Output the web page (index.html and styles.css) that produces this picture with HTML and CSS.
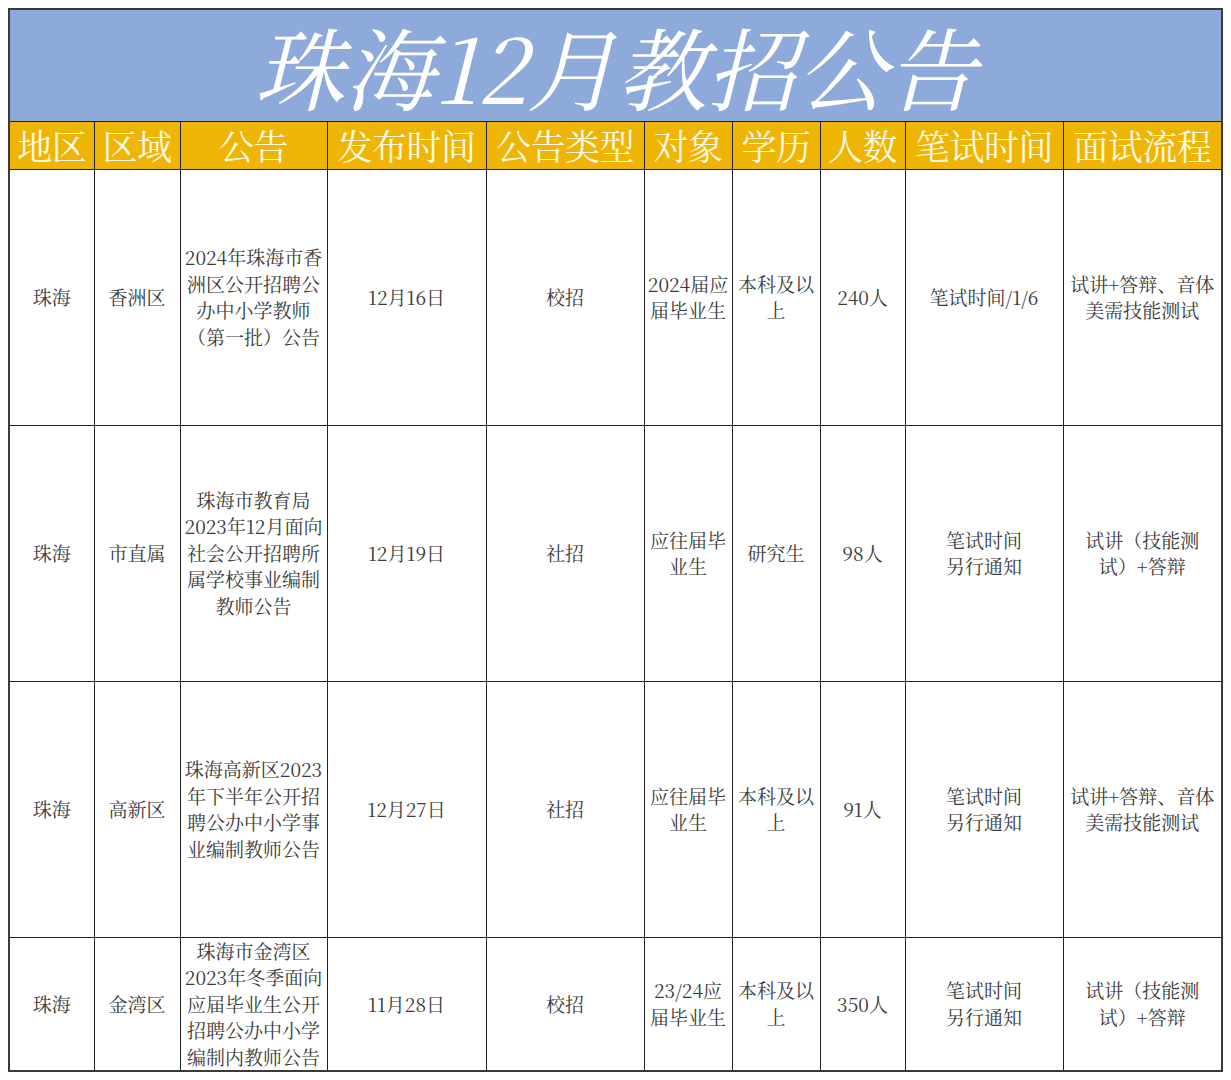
FILE: index.html
```html
<!DOCTYPE html>
<html lang="zh-CN">
<head>
<meta charset="utf-8">
<title>珠海12月教招公告</title>
<link rel="stylesheet" href="styles.css">
</head>
<body>
<table class="sheet">
  <colgroup>
    <col class="c85"><col class="c86"><col class="c147"><col class="c159"><col class="c158">
    <col class="c88"><col class="c88"><col class="c85"><col class="c158"><col class="c159">
  </colgroup>
  <tr class="title-row"><td colspan="10" class="title">珠海12月教招公告</td></tr>
  <tr class="head-row">
    <th>地区</th><th>区域</th><th>公告</th><th>发布时间</th><th>公告类型</th><th>对象</th><th>学历</th><th>人数</th><th>笔试时间</th><th>面试流程</th>
  </tr>
  <tr class="row tall">
    <td>珠海</td><td>香洲区</td>
    <td>2024年珠海市香<br>洲区公开招聘公<br>办中小学教师<br>（第一批）公告</td>
    <td>12月16日</td><td>校招</td>
    <td>2024届应<br>届毕业生</td><td>本科及以<br>上</td><td>240人</td>
    <td>笔试时间/1/6</td><td>试讲+答辩、音体<br>美需技能测试</td>
  </tr>
  <tr class="row tall">
    <td>珠海</td><td>市直属</td>
    <td>珠海市教育局<br>2023年12月面向<br>社会公开招聘所<br>属学校事业编制<br>教师公告</td>
    <td>12月19日</td><td>社招</td>
    <td>应往届毕<br>业生</td><td>研究生</td><td>98人</td>
    <td>笔试时间<br>另行通知</td><td>试讲（技能测<br>试）+答辩</td>
  </tr>
  <tr class="row tall">
    <td>珠海</td><td>高新区</td>
    <td>珠海高新区2023<br>年下半年公开招<br>聘公办中小学事<br>业编制教师公告</td>
    <td>12月27日</td><td>社招</td>
    <td>应往届毕<br>业生</td><td>本科及以<br>上</td><td>91人</td>
    <td>笔试时间<br>另行通知</td><td>试讲+答辩、音体<br>美需技能测试</td>
  </tr>
  <tr class="row short">
    <td>珠海</td><td>金湾区</td>
    <td>珠海市金湾区<br>2023年冬季面向<br>应届毕业生公开<br>招聘公办中小学<br>编制内教师公告</td>
    <td>11月28日</td><td>校招</td>
    <td>23/24应<br>届毕业生</td><td>本科及以<br>上</td><td>350人</td>
    <td>笔试时间<br>另行通知</td><td>试讲（技能测<br>试）+答辩</td>
  </tr>
</table>
</body>
</html>
```
FILE: styles.css
```css
html, body {
  margin: 0;
  padding: 0;
  background: #ffffff;
}
body {
  padding: 8px 0 0 8px;
  font-family: "Noto Serif CJK SC", "Noto Sans CJK SC", "Liberation Serif", serif;
}
.sheet {
  border-collapse: collapse;
  table-layout: fixed;
  width: 1214px;
  border: 2px solid #3a3a3a;
}
.c85 { width: 85px; }
.c86 { width: 86px; }
.c88 { width: 88px; }
.c147 { width: 147px; }
.c158 { width: 158px; }
.c159 { width: 159px; }

.sheet td, .sheet th {
  border: 1.5px solid #222;
  padding: 0 2px;
  text-align: center;
  vertical-align: middle;
  white-space: nowrap;
}
.title-row { height: 112px; }
.title {
  background: #8eaadb;
  color: #ffffff;
  font-size: 90px;
  font-style: italic;
  font-weight: 400;
  line-height: 100px;
  height: 112px;
  padding: 4px 0 0 0;
  letter-spacing: 0;
  box-sizing: border-box;
}
.head-row { height: 48px; }
.head-row th {
  background: #efb506;
  color: #fff9e0;
  font-size: 35px;
  font-weight: 400;
  line-height: 44px;
  letter-spacing: -0.5px;
  padding: 0;
}
.row td {
  color: #3a3a3a;
  font-size: 19px;
  line-height: 26.5px;
  background: #fff;
}
.tall { height: 256px; }
.short { height: 134px; }
```
